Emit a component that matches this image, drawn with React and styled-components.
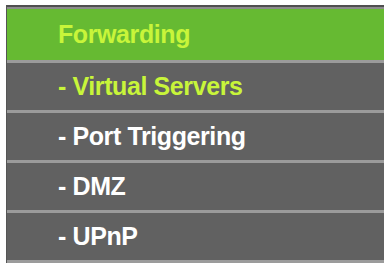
import React from 'react'
import styled, { createGlobalStyle } from 'styled-components'

const Global = createGlobalStyle`
  body {
    margin: 0;
    background: #fff;
  }
`

const Page = styled.div`
  padding: 5px 4px 0 6px;
`

const Menu = styled.ul`
  list-style: none;
  margin: 0;
  padding: 0;
  width: 377px;
  border-top: 2px solid #4f4f4f;
  border-left: 1px solid #555;
  background: #616161;
  font-family: "Liberation Sans", Arial, sans-serif;
  font-weight: bold;
  font-size: 25px;
  letter-spacing: -0.4px;
`

const Item = styled.li`
  display: flex;
  align-items: center;
  height: ${({ $head }) => ($head ? '51px' : '47px')};
  padding-left: 51px;
  background: ${({ $head }) => ($head ? '#66ba32' : '#616161')};
  border-top: ${({ $head }) => ($head ? '2px solid #8c8c8c' : 'none')};
  border-bottom: 3px solid #9b9b9b;
  color: ${({ $active }) => ($active ? '#c8f53a' : '#ffffff')};
  white-space: nowrap;
`

const items = [
  { label: 'Forwarding', head: true, active: true },
  { label: '- Virtual Servers', active: true },
  { label: '- Port Triggering' },
  { label: '- DMZ' },
  { label: '- UPnP' },
]

const App = () => {
  return (
    <Page>
      <Global />
      <Menu>
        {items.map(e => (
          <Item key={e.label} $head={e.head} $active={e.active}>{e.label}</Item>
        ))}
      </Menu>
    </Page>
  )
}

export default App
